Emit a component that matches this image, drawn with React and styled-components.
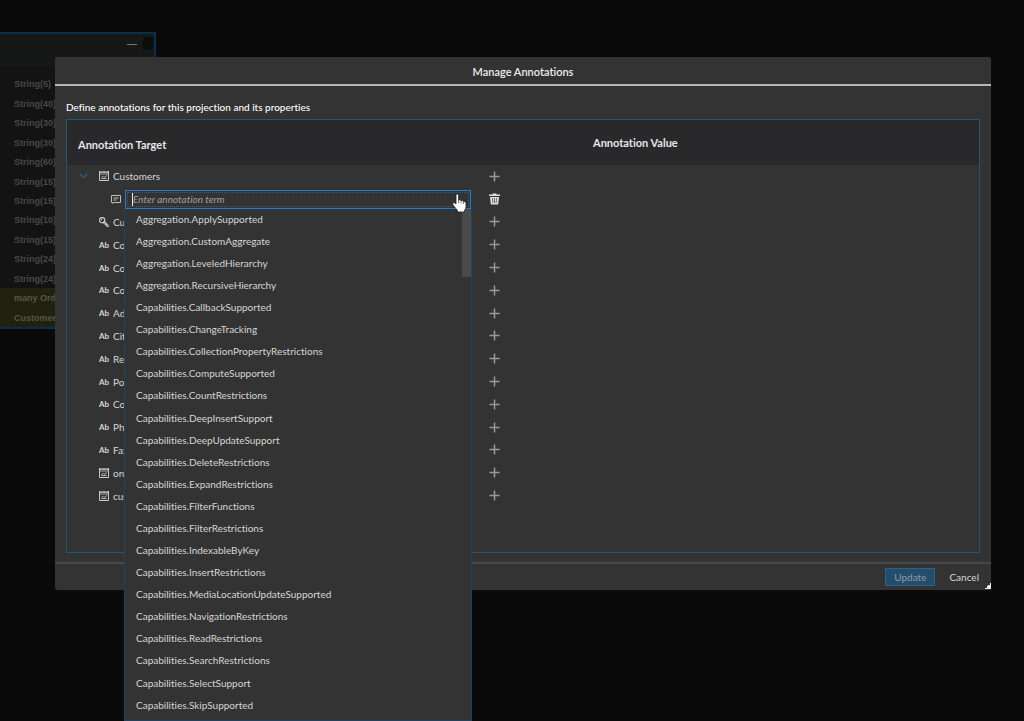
import React from "react";
import styled, { createGlobalStyle, css } from "styled-components";

const entityFields = [
  "String(5)",
  "String(40)",
  "String(30)",
  "String(30)",
  "String(60)",
  "String(15)",
  "String(15)",
  "String(10)",
  "String(15)",
  "String(24)",
  "String(24)",
];

const associations = ["many Ord", "Customer"];

const properties = [
  { icon: "key", name: "Cu" },
  { icon: "text", name: "Co" },
  { icon: "text", name: "Co" },
  { icon: "text", name: "Co" },
  { icon: "text", name: "Ad" },
  { icon: "text", name: "Cit" },
  { icon: "text", name: "Re" },
  { icon: "text", name: "Po" },
  { icon: "text", name: "Co" },
  { icon: "text", name: "Ph" },
  { icon: "text", name: "Fax" },
  { icon: "entity", name: "ord" },
  { icon: "entity", name: "cus" },
];

const terms = [
  "Aggregation.ApplySupported",
  "Aggregation.CustomAggregate",
  "Aggregation.LeveledHierarchy",
  "Aggregation.RecursiveHierarchy",
  "Capabilities.CallbackSupported",
  "Capabilities.ChangeTracking",
  "Capabilities.CollectionPropertyRestrictions",
  "Capabilities.ComputeSupported",
  "Capabilities.CountRestrictions",
  "Capabilities.DeepInsertSupport",
  "Capabilities.DeepUpdateSupport",
  "Capabilities.DeleteRestrictions",
  "Capabilities.ExpandRestrictions",
  "Capabilities.FilterFunctions",
  "Capabilities.FilterRestrictions",
  "Capabilities.IndexableByKey",
  "Capabilities.InsertRestrictions",
  "Capabilities.MediaLocationUpdateSupported",
  "Capabilities.NavigationRestrictions",
  "Capabilities.ReadRestrictions",
  "Capabilities.SearchRestrictions",
  "Capabilities.SelectSupport",
  "Capabilities.SkipSupported",
];

function EntityIcon() {
  return (
    <svg width="10" height="10" viewBox="0 0 10 10" fill="none" stroke="#c8c8c8" aria-hidden="true">
      <path d="M0.5 0.5V9.5H9.5V0.5" />
      <path d="M0 1H10" strokeWidth="1.6" />
      <path d="M3 0V0.8M7 0V0.8" stroke="#333" />
      <path d="M0.5 3H9.5" strokeWidth="0.8" />
      <path d="M2.4 6.6L4.2 5.4L5.2 6.4L7.8 4.6M2.4 7.6H7.6" strokeWidth="0.9" />
    </svg>
  );
}

function KeyIcon() {
  return (
    <svg width="10" height="10" viewBox="0 0 10 10" fill="none" stroke="#d0d0d0" aria-hidden="true">
      <circle cx="3.2" cy="3.2" r="2.6" strokeWidth="1.1" />
      <circle cx="2.6" cy="2.6" r="0.6" fill="#d0d0d0" stroke="none" />
      <path d="M5.4 4.2L9.4 8.2V9.5H7.8V8.3H6.6V7.1H5.5L4.2 5.6" strokeWidth="1" />
      <path d="M4.4 4.4L8 8" strokeWidth="0.9" />
    </svg>
  );
}

function TermIcon() {
  return (
    <svg width="10" height="9" viewBox="0 0 10 9" fill="none" stroke="#c0c0c0" aria-hidden="true">
      <path d="M0.5 0.5H9.5V7.5H3L2 8.5V7.5H0.5Z" />
      <path d="M2.5 3H7.5M2.5 5H5.5" />
    </svg>
  );
}

function PlusIcon() {
  return (
    <svg width="11" height="11" viewBox="0 0 11 11" aria-hidden="true">
      <path d="M5.5 0.5V10.5M0.5 5.5H10.5" stroke="#999" strokeWidth="1.5" />
    </svg>
  );
}

function TrashIcon() {
  return (
    <svg width="11" height="12" viewBox="0 0 11 12" aria-hidden="true">
      <path d="M0 1.5H3.5V0.5H7.5V1.5H11V3H0Z" fill="#ddd" />
      <path d="M1 4H10L9.2 11.5H1.8Z" fill="#ddd" />
      <path d="M3.5 5L3.8 10M5.5 5V10M7.5 5L7.2 10" stroke="#555" strokeWidth="0.8" />
    </svg>
  );
}

const icons = { entity: <EntityIcon />, key: <KeyIcon /> };

export default function App() {
  return (
    <>
      <GlobalStyle />
      <Canvas>
        <EntityCard>
          <EntityHeader>
            <Minimize />
            <Corner />
          </EntityHeader>
          <FieldList>
            {entityFields.map((type, i) => (
              <Field key={i}>{type}</Field>
            ))}
            {associations.map((name) => (
              <Field key={name} $association>
                {name}
              </Field>
            ))}
          </FieldList>
        </EntityCard>

        <Overlay>
          <Dialog role="dialog" aria-labelledby="dialog-title">
            <DialogTitle id="dialog-title">Manage Annotations</DialogTitle>
            <DialogBody>
              <Description>Define annotations for this projection and its properties</Description>
              <Panel>
                <Table>
                  <thead>
                    <HeadRow>
                      <TargetHead>Annotation Target</TargetHead>
                      <ActionHead />
                      <ValueHead>Annotation Value</ValueHead>
                    </HeadRow>
                  </thead>
                  <tbody>
                    <tr>
                      <Cell>
                        <Target>
                          <Toggle type="button" aria-label="Collapse Customers">
                            <svg width="9" height="6" viewBox="0 0 9 6" fill="none" aria-hidden="true">
                              <path d="M1 1L4.5 4.5L8 1" stroke="#28608f" strokeWidth="1.2" />
                            </svg>
                          </Toggle>
                          <EntityIcon />
                          Customers
                        </Target>
                      </Cell>
                      <Cell>
                        <IconButton type="button" aria-label="Add annotation">
                          <PlusIcon />
                        </IconButton>
                      </Cell>
                      <Cell />
                    </tr>
                    <tr>
                      <Cell>
                        <TermTarget>
                          <TermIcon />
                          <Combo>
                            <TermInput aria-label="Annotation term" placeholder="Enter annotation term" />
                            <Caret />
                            <Menu role="listbox" aria-label="Annotation terms">
                              {terms.map((term) => (
                                <Option key={term} role="option">
                                  {term}
                                </Option>
                              ))}
                              <ScrollThumb />
                            </Menu>
                            <Pointer width="15" height="20" viewBox="0 0 15 20" aria-hidden="true">
                              <path
                                d="M4 11V2.5Q4 1 5.3 1Q6.6 1 6.6 2.5V7Q8.6 6.2 9 7.7Q11 7 11.4 8.5Q13.8 8 14 10V14Q13.6 16 12.5 17.5V19H5.5V17.5L1 12Q0.2 10.5 1.4 9.8Q2.6 9.4 4 11Z"
                                fill="#fff"
                                stroke="#222"
                                strokeWidth="0.8"
                              />
                              <path d="M6.6 7V10M9 8V10.5M11.4 9V11" stroke="#333" strokeWidth="0.7" />
                            </Pointer>
                          </Combo>
                        </TermTarget>
                      </Cell>
                      <Cell>
                        <IconButton type="button" aria-label="Delete annotation">
                          <TrashIcon />
                        </IconButton>
                      </Cell>
                      <Cell />
                    </tr>
                    {properties.map(({ icon, name }, i) => (
                      <tr key={i}>
                        <Cell>
                          <PropertyTarget>
                            {icon === "text" ? <TypeBadge>Ab</TypeBadge> : icons[icon]}
                            <PropertyName>{name}</PropertyName>
                          </PropertyTarget>
                        </Cell>
                        <Cell>
                          <IconButton type="button" aria-label="Add annotation">
                            <PlusIcon />
                          </IconButton>
                        </Cell>
                        <Cell />
                      </tr>
                    ))}
                  </tbody>
                </Table>
              </Panel>
            </DialogBody>
            <DialogFooter>
              <UpdateButton type="button">Update</UpdateButton>
              <FooterButton type="button">Cancel</FooterButton>
            </DialogFooter>
            <ResizeHandle />
          </Dialog>
        </Overlay>
      </Canvas>
    </>
  );
}

/* ================== Styled Components ================== */

const GlobalStyle = createGlobalStyle`
  * {
    box-sizing: border-box;
  }

  body {
    margin: 0;
    background: #0a0a0a;
    overflow: hidden;
  }

  button, input {
    font: inherit;
  }
`;

const Canvas = styled.main`
  min-height: 100vh;
  padding-top: 32px;
  overflow: hidden;
  background: #0a0a0a;
  color: #d6d6d6;
  font-family: Lato, "Noto Sans", sans-serif;
  font-size: 10px;
  font-variant-ligatures: none;
`;

const EntityCard = styled.section`
  width: 156px;
  background: #131313;
  border: solid #0a2f49;
  border-width: 2px 2px 2px 0;
`;

const EntityHeader = styled.header`
  display: flex;
  justify-content: flex-end;
  align-items: flex-start;
  gap: 6px;
  height: 32px;
  padding: 3px 1px;
  background: #151817;
`;

const Minimize = styled.span`
  width: 10px;
  height: 1px;
  margin-top: 7px;
  background: #777;
`;

const Corner = styled.span`
  width: 10px;
  height: 13px;
  background: #0c0d0d;
`;

const FieldList = styled.ul`
  display: grid;
  grid-auto-rows: 1fr;
  height: 261px;
  margin: 0;
  padding: 8px 0 0;
  list-style: none;
  font-family: "Liberation Sans", Arial, sans-serif;
  font-size: 9px;
  font-weight: bold;
`;

const Field = styled.li`
  display: flex;
  align-items: center;
  padding: 1px 0 0 14px;
  white-space: nowrap;
  color: #484848;
  ${({ $association }) =>
    $association &&
    css`
      background: #212110;
      color: #55554b;
    `}
`;

const Overlay = styled.div`
  position: fixed;
  inset: 0;
  padding: 57px 33px 0 55px;
`;

const Dialog = styled.section`
  position: relative;
  background: #333;
  border-radius: 2px;
`;

const DialogTitle = styled.h1`
  margin: 0;
  padding: 6px 0 4px;
  border-bottom: 2px solid #b8b6b8;
  color: #ececec;
  font-size: 11px;
  font-weight: 600;
  line-height: 17px;
  text-align: center;
`;

const DialogBody = styled.div`
  padding: 14px 11px 9px;
`;

const Description = styled.p`
  margin: 0 0 5px;
  color: #fff;
  font-weight: 500;
  line-height: 14px;
`;

const Panel = styled.div`
  min-height: 434px;
  border: 1px solid #235577;
`;

const Table = styled.table`
  width: 100%;
  height: 387px;
  border-collapse: collapse;
  table-layout: fixed;
`;

const HeadRow = styled.tr`
  height: 45px;
  background: #29292b;
`;

const TargetHead = styled.th`
  padding: 3px 0 0 11px;
  color: #e6e6e6;
  font-size: 11px;
  font-weight: 700;
  text-align: left;
`;

const ActionHead = styled.td`
  width: 109px;
`;

const ValueHead = styled(TargetHead)`
  width: 386px;
  padding: 0;
`;

const Cell = styled.td`
  padding: 0;
`;

const Target = styled.div`
  display: flex;
  align-items: center;
  gap: 4px;
  height: 19px;
  padding-left: 12px;
  white-space: nowrap;
`;

const PropertyTarget = styled(Target)`
  padding-left: 32px;
`;

const TermTarget = styled(Target)`
  padding-left: 44px;
`;

const Toggle = styled.button`
  display: flex;
  width: 9px;
  margin-right: 7px;
  padding: 0;
  border: 0;
  background: none;
`;

const TypeBadge = styled.span`
  width: 10px;
  color: #d8d8d8;
  font-size: 8px;
  font-weight: 700;
`;

const PropertyName = styled.span`
  width: 12px;
  overflow: hidden;
`;

const IconButton = styled.button`
  display: flex;
  margin-left: 5px;
  padding: 0;
  border: 0;
  background: none;
`;

const Combo = styled.div`
  position: relative;
  flex: 1;
  margin-right: 13px;
`;

const TermInput = styled.input`
  display: block;
  width: 100%;
  height: 19px;
  padding: 0 7px;
  border: 1px solid #2b79c6;
  border-radius: 0;
  outline: 1px dotted #28608f;
  outline-offset: -3px;
  background: #333;
  color: #d6d6d6;

  &::placeholder {
    color: #a0a0a0;
    font-style: italic;
    opacity: 1;
  }
`;

const Caret = styled.span`
  position: absolute;
  top: 3px;
  left: 7px;
  width: 1px;
  height: 13px;
  background: #eee;
`;

const Menu = styled.ul`
  position: absolute;
  z-index: 1;
  top: 100%;
  left: -1px;
  right: -1px;
  display: grid;
  grid-auto-rows: 1fr;
  height: 512px;
  margin: 0;
  padding: 0 0 3px;
  border: solid #24415a;
  border-width: 0 1px 1px;
  background: #333;
  list-style: none;
`;

const Option = styled.li`
  display: flex;
  align-items: center;
  padding: 0 0 2px 11px;
`;

const ScrollThumb = styled.span`
  position: absolute;
  top: 0;
  right: 0;
  width: 9px;
  height: 68px;
  background: #4a4a4a;
`;

const Pointer = styled.svg`
  position: absolute;
  z-index: 2;
  top: 3px;
  right: 4px;
`;

const DialogFooter = styled.footer`
  display: flex;
  justify-content: flex-end;
  gap: 5px;
  padding: 4px 3px 4px;
  border-top: 2px solid #484848;
`;

const FooterButton = styled.button`
  height: 18px;
  padding: 0 8px;
  border: 1px solid transparent;
  background: none;
  color: #d6d6d6;
  line-height: 14px;
`;

const UpdateButton = styled(FooterButton)`
  border-color: #2c628a;
  background: #244d6c;
  color: #8e9ca8;
`;

const ResizeHandle = styled.span`
  position: absolute;
  right: 0;
  bottom: 1px;
  width: 6px;
  height: 6px;
  background: linear-gradient(135deg, transparent 50%, #eee 50%);
`;
